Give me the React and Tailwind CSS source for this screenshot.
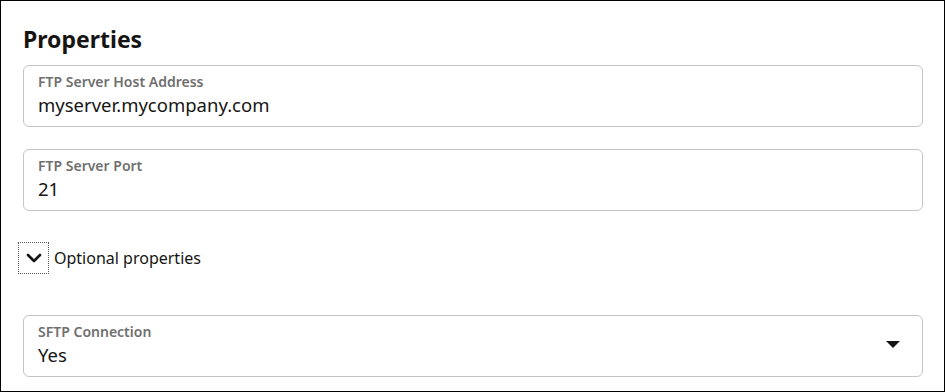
import React from "react";

function Field({ label, value, select }) {
  return (
    <div className="relative w-[900px] h-[62px] rounded-[6px] border border-[#c4c4c4] bg-white pl-[14px] pt-[7px]">
      <div className="text-[14px] leading-[18px] font-semibold text-[#6f6f6f]">{label}</div>
      <div className="text-[18.5px] leading-[26px] text-[#161513] mt-[1px]">{value}</div>
      {select && (
        <div className="absolute right-[22px] top-[25px] w-0 h-0 border-l-[7px] border-r-[7px] border-t-[7px] border-l-transparent border-r-transparent border-t-[#161513]" />
      )}
    </div>
  );
}

export default function App() {
  return (
    <div
      className="w-[945px] h-[392px] border border-black bg-white overflow-hidden"
      style={{ fontFamily: '"Noto Sans", "Open Sans", sans-serif' }}
    >
      <div className="pl-[22px] pt-[22px] flex flex-col">
        <div className="text-[23px] leading-[32px] font-bold text-[#161513]">Properties</div>
        <div className="mt-[10px]">
          <Field label="FTP Server Host Address" value="myserver.mycompany.com" />
        </div>
        <div className="mt-[22px]">
          <Field label="FTP Server Port" value="21" />
        </div>
        <div className="mt-[31px] -ml-[5px] flex items-center">
          <div className="w-[31px] h-[32px] border border-dotted border-[#555] flex items-center justify-center">
            <svg width="16" height="10" viewBox="0 0 16 10">
              <path d="M2 2 L8 8 L14 2" fill="none" stroke="#161513" strokeWidth="2.6" strokeLinecap="round" strokeLinejoin="round" />
            </svg>
          </div>
          <span className="ml-[5px] text-[16px] text-[#161513]">Optional properties</span>
        </div>
        <div className="mt-[41px]">
          <Field label="SFTP Connection" value="Yes" select />
        </div>
      </div>
    </div>
  );
}
